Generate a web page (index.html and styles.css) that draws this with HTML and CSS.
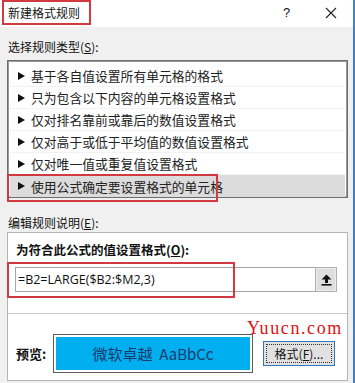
FILE: index.html
```html
<!DOCTYPE html>
<html>
<head>
<meta charset="utf-8">
<link rel="stylesheet" href="styles.css">
</head>
<body>
<div class="win">
  <div class="titlebar">
    <span class="title">新建格式规则</span>
    <span class="help">?</span>
    <span class="close"><svg width="12" height="12" viewBox="0 0 12 12"><path d="M1 1L11 11M11 1L1 11" stroke="#222" stroke-width="1.1" fill="none"/></svg></span>
  </div>
  <div class="main">
    <div class="label l1">选择规则类型(<u>S</u>):</div>
    <div class="list">
      <div class="row"><svg class="tri" width="7" height="8" viewBox="0 0 7 8"><path d="M0 0L7 4L0 8Z" fill="#111"/></svg>基于各自值设置所有单元格的格式</div>
      <div class="row"><svg class="tri" width="7" height="8" viewBox="0 0 7 8"><path d="M0 0L7 4L0 8Z" fill="#111"/></svg>只为包含以下内容的单元格设置格式</div>
      <div class="row"><svg class="tri" width="7" height="8" viewBox="0 0 7 8"><path d="M0 0L7 4L0 8Z" fill="#111"/></svg>仅对排名靠前或靠后的数值设置格式</div>
      <div class="row"><svg class="tri" width="7" height="8" viewBox="0 0 7 8"><path d="M0 0L7 4L0 8Z" fill="#111"/></svg>仅对高于或低于平均值的数值设置格式</div>
      <div class="row"><svg class="tri" width="7" height="8" viewBox="0 0 7 8"><path d="M0 0L7 4L0 8Z" fill="#111"/></svg>仅对唯一值或重复值设置格式</div>
      <div class="row sel"><svg class="tri" width="7" height="8" viewBox="0 0 7 8"><path d="M0 0L7 4L0 8Z" fill="#111"/></svg>使用公式确定要设置格式的单元格<div class="mark mark-row"></div></div>
    </div>
    <div class="label l2">编辑规则说明(<u>E</u>):</div>
    <div class="panel">
      <div class="plabel">为符合此公式的值设置格式(<u>O</u>):</div>
      <div class="inrow">
        <div class="input">=B2=LARGE($B2:$M2,3)<div class="mark mark-in"></div></div>
        <div class="upbtn"><svg width="11" height="12" viewBox="0 0 11 12"><path d="M5.5 0.5L10.5 5.5H7V9H4V5.5H0.5Z" fill="#111"/><rect x="0.5" y="10" width="10" height="1.6" fill="#111"/></svg></div>
      </div>
      <div class="sep"></div>
      <div class="wm">Yuucn.com</div>
      <div class="prow">
        <span class="plab">预览:</span>
        <div class="prev"><div class="prev-in">微软卓越&nbsp;&nbsp;AaBbCc</div></div>
        <div class="fbtn"><span class="focus">格式(<u>F</u>)...</span></div>
      </div>
    </div>
  </div>
</div>
</body>
</html>
```
FILE: styles.css
```css
* { box-sizing: border-box; }
html, body { margin: 0; padding: 0; }
body {
  width: 355px;
  height: 383px;
  overflow: hidden;
  font-family: "Noto Sans CJK SC", "Liberation Sans", sans-serif;
  font-size: 12px;
  color: #111;
  background: #f0f0f0;
}
.win {
  width: 355px;
  height: 383px;
  border-right: 2px solid #3d82c8;
  background: #f0f0f0;
  position: relative;
}
.titlebar {
  height: 27px;
  background: #fff;
  display: flex;
  align-items: flex-start;
  position: relative;
}
.title {
  margin-left: 2px;
  height: 25px;
  width: 89px;
  border: 2px solid #d23a40;
  padding-left: 4px;
  line-height: 21px;
  font-size: 12px;
  color: #111;
}
.help {
  position: absolute;
  left: 283px;
  top: 5px;
  font-size: 13px;
  line-height: 16px;
  font-family: "Liberation Sans", sans-serif;
}
.close {
  position: absolute;
  left: 325px;
  top: 7px;
  line-height: 0;
}
.main {
  padding: 12px 0 0 7px;
}
.label {
  line-height: 16px;
  padding-left: 1px;
  font-size: 12px;
}
.list {
  margin-top: 5px;
  width: 341px;
  background: #fff;
  border: 1px solid #6e6e6e;
  box-shadow: inset 0 0 0 1px #9a9a9a;
  padding: 4px 2px 0 2px;
}
.row {
  height: 22px;
  display: flex;
  align-items: center;
  font-size: 12.8px;
  padding-left: 8px;
  border-bottom: 1px solid #f2f2f2;
  position: relative;
  color: #222;
}
.row .tri { margin-right: 6px; flex: none; }
.row.sel { background: #dcdcdc; border-bottom: none; }
.mark {
  position: absolute;
  border: 2px solid #d23a40;
  pointer-events: none;
}
.mark-row {
  left: -3px;
  top: -1px;
  width: 211px;
  height: 28px;
}
.l2 { margin-top: 17px; }
.panel {
  margin-top: 1px;
  width: 341px;
  height: 149px;
  background: #fff;
  border: 1px solid #b4b4b4;
  position: relative;
  padding-top: 8px;
}
.plabel {
  padding-left: 8px;
  font-weight: bold;
  font-size: 12.5px;
  line-height: 18px;
}
.inrow {
  margin-top: 8px;
  margin-left: 7px;
  display: flex;
  height: 25px;
}
.input {
  width: 300px;
  height: 25px;
  border: 1px solid #a6a6a6;
  border-right: none;
  font-family: "Open Sans", "Liberation Sans", sans-serif;
  font-size: 12.5px;
  line-height: 23px;
  padding-left: 2px;
  position: relative;
}
.mark-in {
  left: -9px;
  top: -6px;
  width: 228px;
  height: 36px;
}
.upbtn {
  width: 22px;
  height: 25px;
  background: #dedede;
  border: 1px solid #b0b0b0;
  box-shadow: inset 0 0 0 1px #ececec;
  display: flex;
  align-items: center;
  justify-content: center;
}
.sep {
  margin-top: 21px;
  height: 1px;
  background: #c8c8c8;
}
.wm {
  position: absolute;
  left: 239px;
  top: 85px;
  font-family: "Liberation Serif", serif;
  font-size: 18px;
  letter-spacing: 1.6px;
  line-height: 20px;
  color: #e01010;
}
.prow {
  margin-top: 20px;
  display: flex;
  align-items: center;
  padding-left: 8px;
}
.plab {
  font-weight: bold;
  font-size: 13px;
  width: 37px;
}
.prev {
  width: 200px;
  height: 39px;
  border: 1px solid #5c5c5c;
  padding: 2px;
  background: #fff;
}
.prev-in {
  height: 100%;
  background: #00aff0;
  display: flex;
  align-items: center;
  justify-content: center;
  font-size: 15px;
  color: #1c3a6a;
}
.fbtn {
  margin-left: 10px;
  width: 72px;
  height: 25px;
  border: 1px solid #2f78bd;
  background: #e1e1e1;
  padding: 2px;
  display: flex;
}
.focus {
  flex: 1;
  border: 1px dotted #333;
  display: flex;
  align-items: center;
  justify-content: center;
  font-size: 12px;
}
```
